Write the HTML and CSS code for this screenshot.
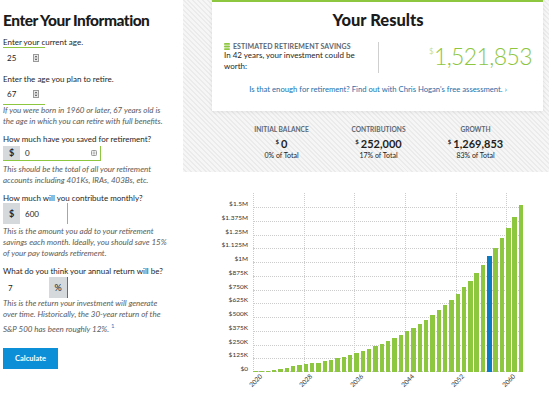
FILE: index.html
```html
<!DOCTYPE html>
<html lang="en">
<head>
    <meta charset="UTF-8">
    <meta name="viewport" content="width=device-width, initial-scale=1.0">
    <title>Retirement Calculator</title>
    <link rel="stylesheet" href="styles.css">
</head>
<body>
<div class="page">
    <section class="form">
        <h1>Enter Your Information</h1>

        <div class="label first">Enter your current age.</div>
        <div class="age-input line-top">
            <span class="value">25</span>
            <svg class="spin" width="6" height="8" viewBox="0 0 6 8"><rect x="0.5" y="0.5" width="5" height="7" fill="#ececec" stroke="#9a9a9a"/><path d="M1.5 3.3 L3 1.8 L4.5 3.3 Z M1.5 4.7 L3 6.2 L4.5 4.7 Z" fill="#444"/></svg>
        </div>

        <div class="label">Enter the age you plan to retire.</div>
        <div class="age-input line-bottom">
            <span class="value">67</span>
            <svg class="spin" width="6" height="8" viewBox="0 0 6 8"><rect x="0.5" y="0.5" width="5" height="7" fill="#ececec" stroke="#9a9a9a"/><path d="M1.5 3.3 L3 1.8 L4.5 3.3 Z M1.5 4.7 L3 6.2 L4.5 4.7 Z" fill="#444"/></svg>
        </div>
        <p class="note n1">If you were born in 1960 or later, 67 years old is<br>the age in which you can retire with full benefits.</p>

        <div class="label">How much have you saved for retirement?</div>
        <div class="money-input saved">
            <span class="addon">$</span>
            <span class="value">0</span>
            <svg class="fill-icon" width="6" height="6" viewBox="0 0 6 6"><rect x="0.5" y="0.5" width="5" height="5" rx="0.8" fill="#f3f3f3" stroke="#9a9a9a"/><path d="M1.8 2.2 H4.2 M1.8 3.8 H4.2" stroke="#9a9a9a" stroke-width="0.8"/></svg>
        </div>
        <p class="note n2">This should be the total of all your retirement<br>accounts including 401Ks, IRAs, 403Bs, etc.</p>

        <div class="label">How much will you contribute monthly?</div>
        <div class="money-input monthly">
            <span class="addon">$</span>
            <span class="value">600</span>
        </div>
        <p class="note n3">This is the amount you add to your retirement<br>savings each month. Ideally, you should save 15%<br>of your pay towards retirement.</p>

        <div class="label">What do you think your annual return will be?</div>
        <div class="pct-input">
            <span class="value">7</span>
            <span class="addon">%</span>
        </div>
        <p class="note n4">This is the return your investment will generate<br>over time. Historically, the 30-year return of the<br>S&amp;P 500 has been roughly 12%. <sup>1</sup></p>

        <button class="calc">Calculate</button>
    </section>

    <section class="results">
        <div class="summary">
            <div class="card">
                <h2>Your Results</h2>
                <div class="estimate">
                    <div class="estimate-text">
                        <div class="caption">
                            <svg width="6" height="7" viewBox="0 0 6 7"><rect x="0" y="0" width="6" height="1.8" rx="0.9" fill="#8dc63f"/><rect x="0" y="2.6" width="6" height="1.8" rx="0.9" fill="#8dc63f"/><rect x="0" y="5.2" width="6" height="1.8" rx="0.9" fill="#8dc63f"/></svg>
                            Estimated Retirement Savings
                        </div>
                        <div class="worth">In 42 years, your investment could be<br>worth:</div>
                    </div>
                    <div class="estimate-total"><sup>$</sup>1,521,853</div>
                </div>
                <a class="assess" href="#">Is that enough for retirement? Find out with Chris Hogan's free assessment. &rsaquo;</a>
            </div>

            <div class="stats">
                <div class="stat">
                    <div class="stat-label">Initial Balance</div>
                    <div class="stat-value"><sup>$</sup>0</div>
                    <div class="stat-share">0% of Total</div>
                </div>
                <div class="stat">
                    <div class="stat-label">Contributions</div>
                    <div class="stat-value"><sup>$</sup>252,000</div>
                    <div class="stat-share">17% of Total</div>
                </div>
                <div class="stat">
                    <div class="stat-label">Growth</div>
                    <div class="stat-value"><sup>$</sup>1,269,853</div>
                    <div class="stat-share">83% of Total</div>
                </div>
            </div>
        </div>

        <div class="chart">
            <div class="ylabels">
                <div>$1.5M</div>
                <div>$1.375M</div>
                <div>$1.25M</div>
                <div>$1.125M</div>
                <div>$1M</div>
                <div>$875K</div>
                <div>$750K</div>
                <div>$625K</div>
                <div>$500K</div>
                <div>$375K</div>
                <div>$250K</div>
                <div>$125K</div>
                <div>$0</div>
            </div>
            <div class="plot-wrap">
                <div class="plot">
                    <div class="hlines">
                        <div></div><div></div><div></div><div></div><div></div><div></div>
                        <div></div><div></div><div></div><div></div><div></div><div></div>
                    </div>
                    <div class="vlines" id="vlines"></div>
                    <div class="bars" id="bars"></div>
                </div>
                <div class="xaxis" id="xaxis"></div>
            </div>
        </div>
    </section>
</div>

<script>
    // balance at the end of each year, in thousands
    const balances = [5, 9, 12, 21, 30, 39, 51, 60, 69, 78, 85, 96, 112, 127, 139, 157, 175, 194, 212, 239,
        257, 285, 312, 339, 373, 403, 439, 475, 521, 564, 612, 657, 712, 769, 830, 900, 969, 1051, 1130,
        1215, 1312, 1412, 1521];
    const startYear = 2020;
    const highlight = 37;
    const maxValue = 1500;
    const plotHeight = 165;

    const bars = document.getElementById('bars');
    const vlines = document.getElementById('vlines');
    const xaxis = document.getElementById('xaxis');

    balances.forEach((value, i) => {
        const bar = document.createElement('div');
        bar.className = i === highlight ? 'bar current' : 'bar';
        bar.style.height = (value / maxValue * plotHeight) + 'px';
        bars.appendChild(bar);

        const line = document.createElement('div');
        line.className = i % 8 === 0 ? 'slot marked' : 'slot';
        vlines.appendChild(line);

        const tick = document.createElement('div');
        tick.className = 'slot';
        if (i % 8 === 0) {
            const year = document.createElement('span');
            year.textContent = startYear + i;
            tick.appendChild(year);
        }
        xaxis.appendChild(tick);
    });
</script>
</body>
</html>
```

FILE: styles.css
```css
* {
    box-sizing: border-box;
}

body {
    margin: 0;
    font-family: "Lato", sans-serif;
    color: #1e1e1e;
    background-color: #ffffff;
}

.page {
    display: flex;
    width: 549px;
    height: 406px;
    overflow: hidden;
}

/* left column */

.form {
    width: 183px;
    padding: 10px 0 0 3px;
    font-size: 8px;
    background-color: #ffffff;
}

h1 {
    margin: 0;
    font-size: 15.5px;
    line-height: 20px;
    font-weight: 900;
    letter-spacing: -0.5px;
    color: #1b1b1b;
}

.label {
    line-height: 10px;
    margin-top: 7px;
    color: #1e1e1e;
}

.age-input {
    display: flex;
    align-items: center;
    width: 42px;
    padding: 0 6px 0 4px;
}

.age-input .value {
    flex: 1;
    line-height: 10px;
}

.line-top {
    height: 20px;
    border-top: 1px solid #8dc63f;
}

.line-bottom {
    height: 21px;
    border-bottom: 1px solid #8dc63f;
}

.note {
    margin: 0;
    font-style: italic;
    line-height: 11px;
    color: #5a5a5a;
}

.n2 {
    margin-top: 3.4px;
}

.n3 {
    margin-top: 1.7px;
}

.money-input {
    display: flex;
    align-items: center;
    background-color: #ffffff;
}

.money-input .addon,
.pct-input .addon {
    display: flex;
    align-items: center;
    justify-content: center;
    align-self: stretch;
    width: 17px;
    background-color: #d5d9dc;
    font-weight: 700;
    font-size: 9px;
    color: #222222;
}

.money-input .value,
.pct-input .value {
    flex: 1;
    line-height: 10px;
    padding-left: 5px;
}

.saved {
    width: 98px;
    height: 15.5px;
    margin-top: 1.5px;
    border-right: 1.3px solid #8dc63f;
    border-bottom: 1px solid #8dc63f;
}

.fill-icon {
    margin-right: 3px;
}

.monthly {
    width: 65px;
    height: 21px;
    border-right: 1.3px solid #8dc63f;
}

.pct-input {
    display: flex;
    align-items: center;
    width: 65px;
    height: 21px;
    margin-top: 1px;
}

.pct-input .addon {
    width: 19px;
    border-right: 1px solid #6a6a6a;
    font-weight: 400;
}

.note sup {
    font-style: normal;
    font-size: 6px;
    color: #1f78c1;
}

.calc {
    display: block;
    margin-top: 13.5px;
    width: 55px;
    height: 21px;
    padding: 0;
    border: none;
    background-color: #0d8fd8;
    color: #ffffff;
    font-family: "Lato", sans-serif;
    font-weight: 700;
    font-size: 7.5px;
}

/* right column */

.results {
    flex: 1;
}

.summary {
    height: 172px;
    background-color: #f2f2f2;
    background-image: repeating-linear-gradient(45deg, #f6f6f6 0 2px, #ebebeb 2px 3.4px);
}

.card {
    width: 331px;
    height: 111px;
    margin-left: 29px;
    padding: 8.3px 11px 0 12px;
    background-color: #ffffff;
    border-top: 2px solid #8dc63f;
    box-shadow: 0 1px 4px rgba(0, 0, 0, 0.08);
}

.card h2 {
    margin: 0;
    text-align: center;
    font-size: 16.5px;
    line-height: 20px;
    font-weight: 900;
    color: #1b1b1b;
}

.estimate {
    display: flex;
    height: 31px;
    margin-top: 12px;
}

.estimate-text {
    width: 154px;
}

.caption {
    display: flex;
    align-items: center;
    gap: 3px;
    line-height: 8px;
    font-size: 7px;
    font-weight: 700;
    text-transform: uppercase;
    letter-spacing: 0.1px;
    color: #5d6873;
}

.worth {
    font-size: 8px;
    line-height: 10.7px;
    color: #1e1e1e;
}

.estimate-total {
    flex: 1;
    border-left: 1px solid #cfcfcf;
    text-align: right;
    font-size: 23px;
    line-height: 18px;
    font-weight: 300;
    letter-spacing: -0.6px;
    color: #8dc63f;
}

.estimate-total sup {
    font-size: 8px;
    vertical-align: 11px;
    margin-right: 1px;
}

.assess {
    display: block;
    margin-top: 11px;
    text-align: center;
    font-size: 7.7px;
    line-height: 10px;
    color: #1d6fab;
    text-decoration: none;
}

.stats {
    display: grid;
    grid-template-columns: repeat(3, 1fr);
    width: 291px;
    margin: 13.5px 0 0 50px;
    text-align: center;
}

.stat-label {
    font-size: 6.6px;
    line-height: 8px;
    font-weight: 700;
    text-transform: uppercase;
    color: #5d6873;
}

.stat-value {
    margin-top: 2.4px;
    font-size: 11px;
    line-height: 13px;
    font-weight: 700;
    color: #1e1e1e;
}

.stat-value sup {
    font-size: 6px;
    vertical-align: 4px;
    margin-right: 2px;
}

.stat-share {
    margin-top: 1.6px;
    font-size: 7px;
    line-height: 9px;
    color: #222222;
}

/* chart */

.chart {
    display: flex;
    margin-top: 21px;
}

.ylabels {
    width: 65px;
    margin-top: 4px;
    text-align: right;
    font-size: 6.5px;
    line-height: 13.75px;
    color: #333333;
}

.plot-wrap {
    margin-left: 5px;
    width: 270px;
}

.plot {
    display: grid;
    height: 179px;
}

.plot > div {
    grid-area: 1 / 1;
}

.hlines {
    display: flex;
    flex-direction: column;
    padding-top: 14px;
}

.hlines div {
    height: 13.75px;
    border-top: 1px dotted #cccccc;
}

.hlines div:last-child {
    border-bottom: 1px dotted #cccccc;
}

.vlines,
.bars,
.xaxis {
    display: flex;
    gap: 1.83px;
}

.bars {
    align-items: flex-end;
}

.slot {
    width: 4.5px;
    flex-shrink: 0;
}

.vlines .marked {
    border-left: 1px dotted #cccccc;
}

.bar {
    width: 4.5px;
    flex-shrink: 0;
    background-color: #8dc63f;
}

.bar.current {
    background-color: #0a7cc1;
}

.xaxis {
    height: 16px;
}

.xaxis .slot {
    display: flex;
    align-items: center;
    justify-content: center;
}

.xaxis span {
    white-space: nowrap;
    font-size: 6.5px;
    color: #333333;
    transform: rotate(-45deg);
}
```
